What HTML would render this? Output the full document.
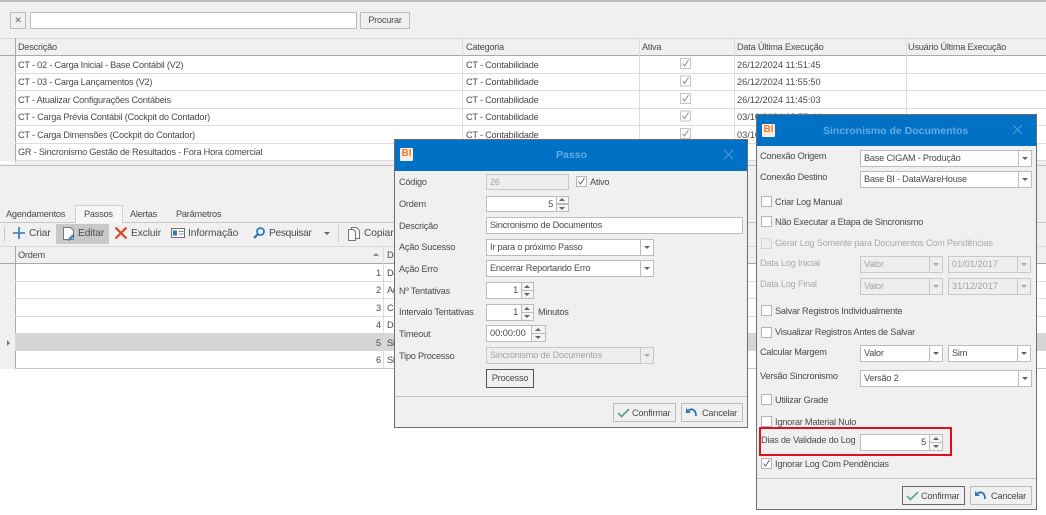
<!DOCTYPE html>
<html><head><meta charset="utf-8">
<style>
html,body{margin:0;padding:0;background:#fff}
#r{position:relative;width:1046px;height:515px;overflow:hidden;background:#fff;font:9.2px/14px "Liberation Sans",sans-serif;letter-spacing:-.22px;color:#4a4a4a;filter:blur(.3px)}
#r div,#r span.a,#r svg.a{position:absolute;box-sizing:border-box}
.t{white-space:nowrap}
.b{font-size:10.2px;letter-spacing:-.08px}
.n{letter-spacing:0 !important}
.h{background:#f0f0f0;border-top:1px solid #d8d8d8;border-bottom:1px solid #a9a9a9}
.l{background:#dcdcdc}
.i{background:#fff;border:1px solid #bcbcbc;padding-left:3px;line-height:15px;white-space:nowrap;color:#4a4a4a}
.d{background:#eee;color:#a4a4a4;border-color:#c8c8c8}
.cb{background:#fff;border:1px solid #b4b4b4;width:11px;height:11px}
.cbd{background:#eee;border-color:#d4d4d4}
.ar{width:0;height:0;border-left:3px solid transparent;border-right:3px solid transparent;border-top:3px solid #666}
.up{width:0;height:0;border-left:3px solid transparent;border-right:3px solid transparent;border-bottom:3px solid #666}
.btn{background:#f0f0f0;border:1px solid #bcbcbc;text-align:center;white-space:nowrap}
.dlg{background:#f0f0f0;border:1px solid #6e6e6e}
.ttl{background:#0071c5;left:0;right:0;top:0;height:31px}
.tc{color:#62abea;font-weight:bold;font-size:10.5px;letter-spacing:0;white-space:nowrap}
.bi{background:#fbeee2;color:#f07c28;font-weight:bold;font-size:10px;letter-spacing:0;line-height:12px;text-align:center;width:13px;height:13px;border-radius:1px}
.dis{color:#aaa}
</style></head><body>
<div id="r">
<!-- top form -->
<div style="left:0;top:0;width:1046px;height:369px;background:#f0f0f0"></div>
<div style="left:0;top:0;width:1046px;height:2px;background:#bdbdbd"></div>
<div class="btn" style="left:10px;top:12px;width:16px;height:17px;line-height:15px;color:#666;font-size:9px">✕</div>
<div class="i" style="left:30px;top:12px;width:327px;height:17px"></div>
<div class="btn t" style="left:360px;top:12px;width:50px;height:17px;line-height:15px">Procurar</div>

<!-- top grid -->
<div style="left:15px;top:55px;width:1031px;height:106px;background:#fff"></div>
<div class="h" style="left:0;top:38px;width:1046px;height:18px"></div>
<div class="l" style="left:15px;top:38px;width:1px;height:124px;background:#aaa"></div>
<div style="left:0;top:161px;width:15px;height:3px;background:#fff"></div>
<div class="t" style="left:18px;top:40px">Descrição</div>
<div class="t" style="left:466px;top:40px">Categoria</div>
<div class="t" style="left:642px;top:40px">Ativa</div>
<div class="t" style="left:737px;top:40px">Data Última Execução</div>
<div class="t" style="left:908px;top:40px">Usuário Última Execução</div>
<div class="l" style="left:462px;top:38px;width:1px;height:124px"></div>
<div class="l" style="left:639px;top:38px;width:1px;height:124px"></div>
<div class="l" style="left:734px;top:38px;width:1px;height:124px"></div>
<div class="l" style="left:906px;top:38px;width:1px;height:124px"></div>
<div class="l" style="left:15px;top:73px;width:1031px;height:1px"></div>
<div class="l" style="left:15px;top:90px;width:1031px;height:1px"></div>
<div class="l" style="left:15px;top:108px;width:1031px;height:1px"></div>
<div class="l" style="left:15px;top:125px;width:1031px;height:1px"></div>
<div class="l" style="left:15px;top:143px;width:1031px;height:1px"></div>
<div class="l" style="left:15px;top:160px;width:1031px;height:1px"></div>
<div class="t" style="left:18px;top:58px">CT - 02 - Carga Inicial - Base Contábil (V2)</div>
<div class="t" style="left:18px;top:75px">CT - 03 - Carga Lançamentos (V2)</div>
<div class="t" style="left:18px;top:93px">CT - Atualizar Configurações Contábeis</div>
<div class="t" style="left:18px;top:110px">CT - Carga Prévia Contábil (Cockpit do Contador)</div>
<div class="t" style="left:18px;top:128px">CT - Carga Dimensões (Cockpit do Contador)</div>
<div class="t" style="left:18px;top:145px">GR - Sincronismo Gestão de Resultados - Fora Hora comercial</div>
<div class="t" style="left:466px;top:58px">CT - Contabilidade</div>
<div class="t" style="left:466px;top:75px">CT - Contabilidade</div>
<div class="t" style="left:466px;top:93px">CT - Contabilidade</div>
<div class="t" style="left:466px;top:110px">CT - Contabilidade</div>
<div class="t" style="left:466px;top:128px">CT - Contabilidade</div>
<div class="t n" style="left:737px;top:58px">26/12/2024 11:51:45</div>
<div class="t n" style="left:737px;top:75px">26/12/2024 11:55:50</div>
<div class="t n" style="left:737px;top:93px">26/12/2024 11:45:03</div>
<div class="t n" style="left:737px;top:110px">03/10/2024 08:55:44</div>
<div class="t n" style="left:737px;top:128px">03/10/2024 08:55:44</div>
<svg class="a" style="left:680px;top:58px" width="12" height="84" fill="none" stroke="#8a8a8a">
<g><rect x=".5" y=".5" width="10" height="10" stroke="#c4c4c4"/><path d="M2.5 5.5l2 2.5 4-6"/></g>
<g transform="translate(0,17.5)"><rect x=".5" y=".5" width="10" height="10" stroke="#c4c4c4"/><path d="M2.5 5.5l2 2.5 4-6"/></g>
<g transform="translate(0,35)"><rect x=".5" y=".5" width="10" height="10" stroke="#c4c4c4"/><path d="M2.5 5.5l2 2.5 4-6"/></g>
<g transform="translate(0,52.5)"><rect x=".5" y=".5" width="10" height="10" stroke="#c4c4c4"/><path d="M2.5 5.5l2 2.5 4-6"/></g>
<g transform="translate(0,70)"><rect x=".5" y=".5" width="10" height="10" stroke="#c4c4c4"/><path d="M2.5 5.5l2 2.5 4-6"/></g>
</svg>
<div style="left:0;top:165px;width:1046px;height:1px;background:#c0c0c0"></div>

<!-- tabs -->
<div class="l" style="left:0;top:222px;width:1046px;height:1px;background:#c8c8c8"></div>
<div style="left:75px;top:205px;width:48px;height:18px;background:#f6f6f6;border:1px solid #cfcfcf;border-bottom:none"></div>
<div class="t" style="left:6px;top:207px">Agendamentos</div>
<div class="t" style="left:84px;top:207px">Passos</div>
<div class="t" style="left:130px;top:207px">Alertas</div>
<div class="t" style="left:176px;top:207px">Parâmetros</div>

<!-- toolbar -->
<div style="left:4px;top:227px;width:1px;height:14px;background:#c4c4c4"></div>
<div style="left:56px;top:224px;width:53px;height:20px;background:#c8c8c8"></div>
<svg class="a" style="left:12px;top:226px" width="14" height="14"><path d="M7 1v12M1 7h12" stroke="#2e77b8" stroke-width="1.6"/></svg>
<div class="t b" style="left:29px;top:227px">Criar</div>
<svg class="a" style="left:62px;top:226px" width="15" height="16"><path d="M1.5 1.5h7l3 3v9h-10z" fill="#fff" stroke="#777"/><path d="M5 14l6-6 2 2-6 5z" fill="#3b86c6"/></svg>
<div class="t b" style="left:78px;top:227px">Editar</div>
<svg class="a" style="left:114px;top:226px" width="14" height="14"><path d="M1.5 1.5l11 11M12.5 1.5l-11 11" stroke="#d9472b" stroke-width="2.2"/></svg>
<div class="t b" style="left:131px;top:227px">Excluir</div>
<svg class="a" style="left:171px;top:228px" width="14" height="11"><rect x=".5" y=".5" width="13" height="9" fill="#fff" stroke="#6f6f6f"/><rect x="2" y="2.5" width="4" height="5" fill="#2e77b8"/><path d="M7.5 3.5h5M7.5 6h5" stroke="#888"/></svg>
<div class="t b" style="left:188px;top:227px">Informação</div>
<svg class="a" style="left:252px;top:226px" width="14" height="14" fill="none"><circle cx="8.5" cy="5.5" r="3.5" stroke="#2e77b8" stroke-width="1.8"/><path d="M6 8l-4 4" stroke="#2e77b8" stroke-width="2.2"/></svg>
<div class="t b" style="left:269px;top:227px;letter-spacing:-.3px">Pesquisar</div>
<div class="ar" style="left:324px;top:232px"></div>
<div style="left:338px;top:225px;width:1px;height:17px;background:#d0d0d0"></div>
<svg class="a" style="left:347px;top:226px" width="14" height="16" fill="#f8f8f8" stroke="#777"><path d="M4.5 1.5h5l3 3v8h-8z"/><path d="M1.5 3.5h5l2 2v9h-7z"/></svg>
<div class="t b" style="left:364px;top:227px">Copiar</div>

<!-- lower grid -->
<div style="left:15px;top:263px;width:1031px;height:106px;background:#fff"></div>
<div class="h" style="left:0;top:246px;width:1046px;height:18px"></div>
<div class="t" style="left:18px;top:248px">Ordem</div>
<div class="up" style="left:373px;top:253px;border-bottom-color:#888"></div>
<div class="t" style="left:387px;top:248px">De</div>
<div class="l" style="left:383px;top:246px;width:1px;height:123px"></div>
<div style="left:15px;top:246px;width:1px;height:123px;background:#aaa"></div>
<div style="left:15px;top:333px;width:1031px;height:18px;background:#d6d6d6"></div>
<div class="l" style="left:15px;top:281px;width:1031px;height:1px"></div>
<div class="l" style="left:15px;top:298px;width:1031px;height:1px"></div>
<div class="l" style="left:15px;top:316px;width:1031px;height:1px"></div>
<div class="l" style="left:15px;top:368px;width:1031px;height:1px;background:#c4c4c4"></div>
<div class="t" style="left:376px;top:266px">1</div><div class="t" style="left:387px;top:266px">De</div>
<div class="t" style="left:376px;top:283px">2</div><div class="t" style="left:387px;top:283px">Ag</div>
<div class="t" style="left:376px;top:301px">3</div><div class="t" style="left:387px;top:301px">Cl</div>
<div class="t" style="left:376px;top:318px">4</div><div class="t" style="left:387px;top:318px">De</div>
<div class="t" style="left:376px;top:336px">5</div><div class="t" style="left:387px;top:336px">Si</div>
<div class="t" style="left:376px;top:353px">6</div><div class="t" style="left:387px;top:353px">Si</div>
<div style="left:7px;top:340px;width:0;height:0;border-top:3px solid transparent;border-bottom:3px solid transparent;border-left:3px solid #777"></div>

<!-- Passo dialog -->
<div class="dlg" style="left:394px;top:139px;width:354px;height:289px">
 <div class="ttl"></div>
 <div class="bi" style="left:5px;top:8px">BI</div>
 <div class="tc" style="left:161px;top:8px">Passo</div>
 <svg class="a" style="left:328px;top:9px" width="11" height="11"><path d="M1 1l9 9M10 1l-9 9" stroke="#4d9bdc" stroke-width="1"/></svg>
 <div style="left:0;right:0;top:256px;height:1px;background:#c4c4c4"></div>
</div>
<div class="t" style="left:399px;top:175px">Código</div>
<div class="i d" style="left:486px;top:174px;width:83px;height:16px">26</div>
<div class="cb" style="left:576px;top:176px"></div>
<svg class="a" style="left:576px;top:176px" width="11" height="11" fill="none" stroke="#666"><path d="M2.5 5.5l2 2.5 4-6"/></svg>
<div class="t" style="left:590px;top:175px">Ativo</div>
<div class="t" style="left:399px;top:197px">Ordem</div>
<div class="i" style="left:486px;top:196px;width:83px;height:16px;text-align:right;padding-right:15px;padding-left:0">5</div>
<div class="btn" style="left:556px;top:196px;width:13px;height:8px;background:#f4f4f4"></div><div class="btn" style="left:556px;top:204px;width:13px;height:8px;background:#f4f4f4"></div>
<div class="up" style="left:559px;top:198px"></div><div class="ar" style="left:559px;top:207px"></div>
<div class="t" style="left:399px;top:219px">Descrição</div>
<div class="i" style="left:486px;top:217px;width:257px;height:17px">Sincronismo de Documentos</div>
<div class="t" style="left:399px;top:240px">Ação Sucesso</div>
<div class="i" style="left:486px;top:239px;width:168px;height:17px">Ir para o próximo Passo</div>
<div class="l" style="left:640px;top:239px;width:1px;height:17px;background:#bcbcbc"></div><div class="ar" style="left:644px;top:246px"></div>
<div class="t" style="left:399px;top:262px">Ação Erro</div>
<div class="i" style="left:486px;top:260px;width:168px;height:17px">Encerrar Reportando Erro</div>
<div class="l" style="left:640px;top:260px;width:1px;height:17px;background:#bcbcbc"></div><div class="ar" style="left:644px;top:267px"></div>
<div class="t" style="left:399px;top:284px">Nº Tentativas</div>
<div class="i" style="left:486px;top:282px;width:48px;height:17px;text-align:right;padding-right:15px;padding-left:0">1</div>
<div class="btn" style="left:521px;top:282px;width:13px;height:9px;background:#f4f4f4"></div><div class="btn" style="left:521px;top:290px;width:13px;height:9px;background:#f4f4f4"></div>
<div class="up" style="left:524px;top:285px"></div><div class="ar" style="left:524px;top:293px"></div>
<div class="t" style="left:399px;top:305px">Intervalo Tentativas</div>
<div class="i" style="left:486px;top:304px;width:48px;height:17px;text-align:right;padding-right:15px;padding-left:0">1</div>
<div class="btn" style="left:521px;top:304px;width:13px;height:9px;background:#f4f4f4"></div><div class="btn" style="left:521px;top:312px;width:13px;height:9px;background:#f4f4f4"></div>
<div class="up" style="left:524px;top:307px"></div><div class="ar" style="left:524px;top:315px"></div>
<div class="t" style="left:538px;top:305px">Minutos</div>
<div class="t" style="left:399px;top:327px">Timeout</div>
<div class="i n" style="left:486px;top:325px;width:60px;height:17px">00:00:00</div>
<div class="btn" style="left:531px;top:325px;width:15px;height:9px;background:#f4f4f4"></div><div class="btn" style="left:531px;top:333px;width:15px;height:9px;background:#f4f4f4"></div>
<div class="up" style="left:535px;top:328px"></div><div class="ar" style="left:535px;top:336px"></div>
<div class="t" style="left:399px;top:349px">Tipo Processo</div>
<div class="i d" style="left:486px;top:347px;width:168px;height:17px">Sincronismo de Documentos</div>
<div class="l" style="left:640px;top:347px;width:1px;height:17px;background:#c8c8c8"></div><div class="ar" style="left:644px;top:354px;border-top-color:#aaa"></div>
<div class="btn" style="left:486px;top:369px;width:48px;height:19px;line-height:17px;border-color:#555">Processo</div>
<div class="btn" style="left:613px;top:403px;width:63px;height:19px"></div>
<svg class="a" style="left:617px;top:407px" width="13" height="11" fill="none"><path d="M1 6l3.5 3.5L12 2" stroke="#6aa387" stroke-width="1.8"/></svg>
<div class="t" style="left:632px;top:406px">Confirmar</div>
<div class="btn" style="left:681px;top:403px;width:62px;height:19px"></div>
<svg class="a" style="left:685px;top:406px" width="14" height="12" fill="none"><path d="M3 5c3-3 8-2 8 5" stroke="#2e77b8" stroke-width="1.8"/><path d="M1 2v5h5z" fill="#2e77b8"/></svg>
<div class="t" style="left:702px;top:406px">Cancelar</div>

<!-- Sincronismo dialog -->
<div class="dlg" style="left:756px;top:114px;width:281px;height:396px">
 <div class="ttl"></div>
 <div class="bi" style="left:5px;top:9px">BI</div>
 <div class="tc" style="left:66px;top:9px">Sincronismo de Documentos</div>
 <svg class="a" style="left:255px;top:9px" width="11" height="11"><path d="M1 1l9 9M10 1l-9 9" stroke="#4d9bdc" stroke-width="1"/></svg>
 <div style="left:0;right:0;top:363px;height:1px;background:#c4c4c4"></div>
</div>
<div class="t" style="left:760px;top:149px">Conexão Origem</div>
<div class="i" style="left:860px;top:150px;width:172px;height:17px">Base CIGAM - Produção</div>
<div class="l" style="left:1018px;top:150px;width:1px;height:17px;background:#bcbcbc"></div><div class="ar" style="left:1022px;top:157px"></div>
<div class="t" style="left:760px;top:170px">Conexão Destino</div>
<div class="i" style="left:860px;top:171px;width:172px;height:17px">Base BI - DataWareHouse</div>
<div class="l" style="left:1018px;top:171px;width:1px;height:17px;background:#bcbcbc"></div><div class="ar" style="left:1022px;top:178px"></div>
<div class="cb" style="left:761px;top:196px"></div><div class="t" style="left:775px;top:195px">Criar Log Manual</div>
<div class="cb" style="left:761px;top:216px"></div><div class="t" style="left:775px;top:215px">Não Executar a Etapa de Sincronismo</div>
<div class="cb cbd" style="left:761px;top:238px"></div><div class="t dis" style="left:775px;top:236px">Gerar Log Somente para Documentos Com Pendências</div>
<div class="t dis" style="left:760px;top:256px">Data Log Inicial</div>
<div class="i d" style="left:860px;top:256px;width:83px;height:17px">Valor</div>
<div class="l" style="left:929px;top:256px;width:1px;height:17px;background:#c8c8c8"></div><div class="ar" style="left:933px;top:263px;border-top-color:#aaa"></div>
<div class="i d n" style="left:948px;top:256px;width:83px;height:17px">01/01/2017</div>
<div class="l" style="left:1017px;top:256px;width:1px;height:17px;background:#c8c8c8"></div><div class="ar" style="left:1021px;top:263px;border-top-color:#aaa"></div>
<div class="t dis" style="left:760px;top:277px">Data Log Final</div>
<div class="i d" style="left:860px;top:278px;width:83px;height:17px">Valor</div>
<div class="l" style="left:929px;top:278px;width:1px;height:17px;background:#c8c8c8"></div><div class="ar" style="left:933px;top:285px;border-top-color:#aaa"></div>
<div class="i d n" style="left:948px;top:278px;width:83px;height:17px">31/12/2017</div>
<div class="l" style="left:1017px;top:278px;width:1px;height:17px;background:#c8c8c8"></div><div class="ar" style="left:1021px;top:285px;border-top-color:#aaa"></div>
<div class="cb" style="left:761px;top:305px"></div><div class="t" style="left:775px;top:304px">Salvar Registros Individualmente</div>
<div class="cb" style="left:761px;top:327px"></div><div class="t" style="left:775px;top:325px">Visualizar Registros Antes de Salvar</div>
<div class="t" style="left:760px;top:345px">Calcular Margem</div>
<div class="i" style="left:860px;top:345px;width:83px;height:17px">Valor</div>
<div class="l" style="left:929px;top:345px;width:1px;height:17px;background:#bcbcbc"></div><div class="ar" style="left:933px;top:352px"></div>
<div class="i" style="left:948px;top:345px;width:83px;height:17px">Sim</div>
<div class="l" style="left:1017px;top:345px;width:1px;height:17px;background:#bcbcbc"></div><div class="ar" style="left:1021px;top:352px"></div>
<div class="t" style="left:760px;top:369px">Versão Sincronismo</div>
<div class="i" style="left:860px;top:370px;width:172px;height:17px">Versão 2</div>
<div class="l" style="left:1018px;top:370px;width:1px;height:17px;background:#bcbcbc"></div><div class="ar" style="left:1022px;top:377px"></div>
<div class="cb" style="left:761px;top:394px"></div><div class="t" style="left:775px;top:393px">Utilizar Grade</div>
<div class="cb" style="left:761px;top:416px"></div><div class="t" style="left:775px;top:415px">Ignorar Material Nulo</div>
<div class="t" style="left:761px;top:433px">Dias de Validade do Log</div>
<div class="i" style="left:860px;top:434px;width:83px;height:17px;text-align:right;padding-right:16px;padding-left:0">5</div>
<div class="btn" style="left:929px;top:434px;width:14px;height:9px;background:#f4f4f4"></div><div class="btn" style="left:929px;top:442px;width:14px;height:9px;background:#f4f4f4"></div>
<div class="up" style="left:933px;top:437px"></div><div class="ar" style="left:933px;top:445px"></div>
<div style="left:759px;top:427px;width:193px;height:29px;border:2px solid #e0101c"></div>
<div class="cb" style="left:761px;top:458px"></div>
<svg class="a" style="left:761px;top:458px" width="11" height="11" fill="none" stroke="#666"><path d="M2.5 5.5l2 2.5 4-6"/></svg>
<div class="t" style="left:775px;top:457px">Ignorar Log Com Pendências</div>
<div class="btn" style="left:902px;top:486px;width:63px;height:19px;border-color:#666"></div>
<svg class="a" style="left:906px;top:490px" width="13" height="11" fill="none"><path d="M1 6l3.5 3.5L12 2" stroke="#6aa387" stroke-width="1.8"/></svg>
<div class="t" style="left:921px;top:489px">Confirmar</div>
<div class="btn" style="left:970px;top:486px;width:62px;height:19px"></div>
<svg class="a" style="left:974px;top:489px" width="14" height="12" fill="none"><path d="M3 5c3-3 8-2 8 5" stroke="#2e77b8" stroke-width="1.8"/><path d="M1 2v5h5z" fill="#2e77b8"/></svg>
<div class="t" style="left:991px;top:489px">Cancelar</div>
</div>
</body></html>
